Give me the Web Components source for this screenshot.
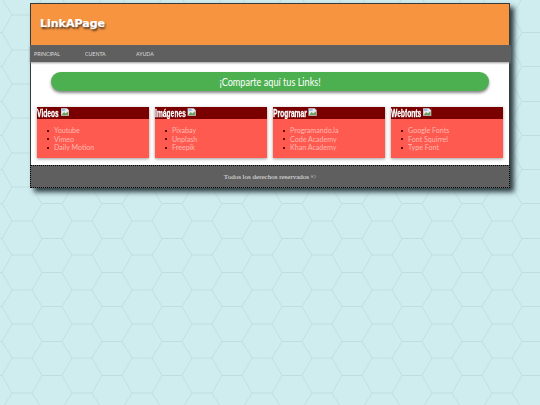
<!DOCTYPE html>
<html>
<head>
<meta charset="utf-8">
<style>
html, body { margin: 0; height: 100%; }
body {
  background-color: #cfecef;
  background-image: url("data:image/svg+xml,%3Csvg xmlns='http://www.w3.org/2000/svg' width='60' height='34.3'%3E%3Cg fill='none' stroke='%23bad4d8' stroke-width='.6'%3E%3Cpath d='M0 17.15L10 0H30L40 17.15L30 34.3H10ZM40 17.15H60'/%3E%3C/g%3E%3C/svg%3E");
  background-position: 2px 15.35px;
}
</style>
</head>
<body>
<link-page>
  <page-header>LinkAPage</page-header>
  <page-nav><a>PRINCIPAL</a><a>CUENTA</a><a>AYUDA</a></page-nav>
  <page-main>
    <share-banner>¡Comparte aquí tus Links!</share-banner>
    <link-grid>
      <link-card title="Videos"><li>Youtube</li><li>Vimeo</li><li>Daily Motion</li></link-card>
      <link-card title="Imágenes"><li>Pixabay</li><li>Unplash</li><li>Freepik</li></link-card>
      <link-card title="Programar"><li>Programando.la</li><li>Code Academy</li><li>Khan Academy</li></link-card>
      <link-card title="Webfonts"><li>Google Fonts</li><li>Font Squirrel</li><li>Type Font</li></link-card>
    </link-grid>
  </page-main>
  <page-footer>Todos los derechos reservados ©</page-footer>
</link-page>

<script>
class link_page extends HTMLElement {
  constructor() {
    super();
    this.attachShadow({ mode: "open" }).innerHTML = `
      <style>
        :host { display: block; width: 480px; margin: 3px auto 0; box-shadow: 4px 4px 5px #2c3c40; background: #fff; }
      </style>
      <slot></slot>`;
  }
}
class page_header extends HTMLElement {
  constructor() {
    super();
    this.attachShadow({ mode: "open" }).innerHTML = `
      <style>
        :host { display: flex; align-items: center; height: 42px; padding-left: 9px; background: #f79440; box-sizing: border-box; border: solid #3a3a3a; border-width: 1px 1px 0; }
        span { font: 700 11px "DejaVu Sans", sans-serif; -webkit-text-stroke: .2px #fff; color: #fff; text-shadow: 1px 1.5px 2px #4a3a2a; margin-top: -2px; }
      </style>
      <span><slot></slot></span>`;
  }
}
class page_nav extends HTMLElement {
  constructor() {
    super();
    this.attachShadow({ mode: "open" }).innerHTML = `
      <style>
        :host { display: flex; align-items: center; height: 17px; padding-left: 4px; background: #5f5f5f; box-shadow: 0 1px 2px #999; position: relative; }
        ::slotted(a) { display: inline-block; transform: scaleX(.82); transform-origin: 0 0; font: 400 6.4px "Lato", sans-serif; color: #ddd; width: 51px; }
      </style>
      <slot></slot>`;
  }
}
class page_main extends HTMLElement {
  constructor() {
    super();
    this.attachShadow({ mode: "open" }).innerHTML = `
      <style>
        :host { display: block; height: 103px; padding-top: 10px; box-sizing: border-box; background: #fff; border: solid #3a3a3a; border-width: 0 1px; }
      </style>
      <slot></slot>`;
  }
}
class share_banner extends HTMLElement {
  constructor() {
    super();
    this.attachShadow({ mode: "open" }).innerHTML = `
      <style>
        :host { display: flex; justify-content: center; align-items: center; height: 19px; margin: 0 20px 16px; border-radius: 10px; background: #4caf50; color: #fff; font: 400 11px "Lato", sans-serif; box-shadow: 0 2px 3px #888; }
        span { display: inline-block; transform: scaleX(.83); white-space: nowrap; }
      </style>
      <span><slot></slot></span>`;
  }
}
class link_grid extends HTMLElement {
  constructor() {
    super();
    this.attachShadow({ mode: "open" }).innerHTML = `
      <style>
        :host { display: grid; grid-template-columns: repeat(4, 112px); gap: 6px; padding-left: 6px; }
      </style>
      <slot></slot>`;
  }
}
class link_card extends HTMLElement {
  constructor() {
    super();
    this.attachShadow({ mode: "open" }).innerHTML = `
      <style>
        :host { display: block; height: 51px; background: #ff5a4f; box-shadow: 0 1px 3px #999; }
        h3 { height: 12px; margin: 0; background: #7a0000; overflow: hidden; }
        /* whole row is squeezed, no condensed font on this box */
        .row { display: flex; align-items: center; gap: 3px; height: 12px; width: 190px; transform: scaleX(.58); transform-origin: 0 0; will-change: transform; color: #fff; font: 700 11.5px "Liberation Sans", sans-serif; -webkit-text-stroke: .3px #fff; }
        svg { width: 14.5px; height: 8px; margin-bottom: 2px; }
        ul { margin: 8px 0 0; padding: 0 0 0 17px; list-style: none; font: 400 7.1px/8.5px "Lato", sans-serif; }
        ::slotted(li) { color: #ffb9b0; }
        ::slotted(li)::before { content: ""; display: inline-block; width: 2px; height: 2px; margin: 0 5.5px 1px -7.5px; background: #5a0d08; vertical-align: middle; }
      </style>
      <h3><div class="row"><span>${this.getAttribute("title")}</span>
        <svg viewBox="0 0 9 8" preserveAspectRatio="none"><rect x=".3" y=".3" width="8.4" height="7.4" fill="#e4e9ec" stroke="#a9aeb4" stroke-width=".6"/><path d="M1 6.8L3.5 4L5 5.5L8 3.4V7H1Z" fill="#6a9f5a"/><path d="M1 1h3.5v2H1z" fill="#9cc0ea"/><path d="M6.5 0L9 2.5V0Z" fill="#7a0000"/></svg></div></h3>
      <ul><slot></slot></ul>`;
  }
}
class page_footer extends HTMLElement {
  constructor() {
    super();
    this.attachShadow({ mode: "open" }).innerHTML = `
      <style>
        :host { display: flex; justify-content: center; align-items: center; height: 23px; box-sizing: border-box; background: #5f5f5f; border: 1px dotted #000; color: #e6e6e6; font: 400 7px "Liberation Serif", serif; }
      </style>
      <slot></slot>`;
  }
}
customElements.define("link-page", link_page);
customElements.define("page-header", page_header);
customElements.define("page-nav", page_nav);
customElements.define("page-main", page_main);
customElements.define("share-banner", share_banner);
customElements.define("link-grid", link_grid);
customElements.define("link-card", link_card);
customElements.define("page-footer", page_footer);
</script>
</body>
</html>
